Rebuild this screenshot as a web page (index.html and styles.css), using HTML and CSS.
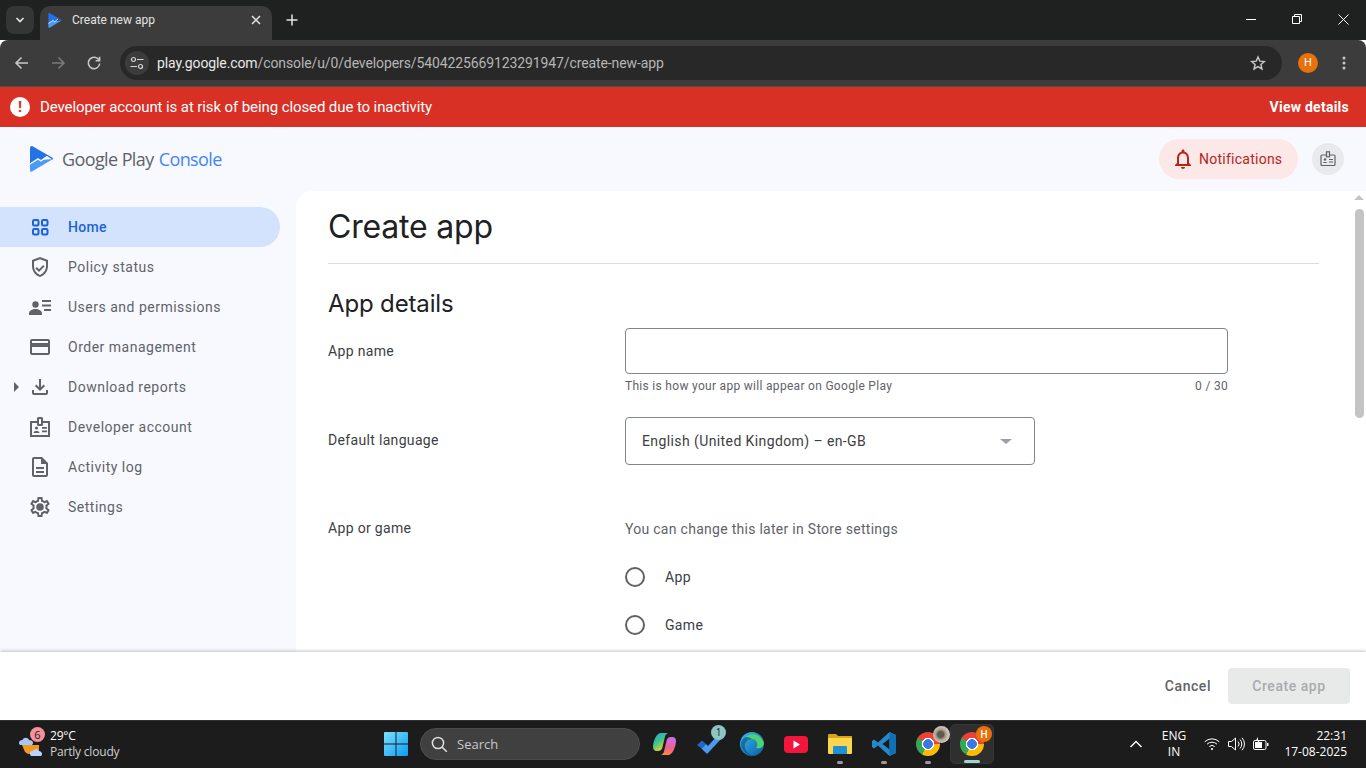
FILE: index.html
```html
<!DOCTYPE html>
<html lang="en">
  <head>
    <meta charset="UTF-8" />
    <meta name="viewport" content="width=device-width, initial-scale=1.0" />
    <title>Create new app</title>
    <link rel="stylesheet" href="styles.css">
  </head>
  <body>
    <svg class="defs" width="0" height="0">
      <symbol id="play-logo" viewBox="0 0 23 26">
        <path fill="#4a9af6" d="M0 17.5 L8 12 L11 14 L23 13 L2 25.6 C1 26 0 25.4 0 24.4Z" />
        <path fill="#2473e6" d="M0 2 C0 .4 1.4 -.4 2.6 .3 L22 11.6 C23.2 12.4 23.2 13 22.4 13.6 L17 10 L11 14 L8 12 L0 17.5Z" />
        <path fill="none" stroke="#fff" stroke-width="1.3" d="M0 18 L8 13 L11 15 L17 10.5" />
      </symbol>
    </svg>

    <!-- browser top -->
    <div class="tabstrip">
      <div class="tab-search">
        <svg width="12" height="12" viewBox="0 0 12 12"><path d="M2.5 4 L6 7.5 L9.5 4" fill="none" stroke="#e3e3e3" stroke-width="1.7" /></svg>
      </div>
      <div class="tab">
        <svg class="tab-icon" width="14" height="15"><use href="#play-logo" /></svg>
        <span class="tab-title">Create new app</span>
        <svg class="tab-close" width="10" height="10" viewBox="0 0 10 10"><path d="M1 1 L9 9 M9 1 L1 9" stroke="#e3e3e3" stroke-width="1.5" /></svg>
      </div>
      <svg class="new-tab" width="12" height="12" viewBox="0 0 12 12"><path d="M6 .5 V11.5 M.5 6 H11.5" stroke="#e3e3e3" stroke-width="1.5" /></svg>
      <div class="window-controls">
        <svg width="10" height="10" viewBox="0 0 10 10"><path d="M0 5.5 H10" stroke="#fff" /></svg>
        <svg width="10" height="10" viewBox="0 0 10 10"><path d="M.5 2.5 H7.5 V9.5 H.5Z M2.5 2.5 V.5 H9.5 V7.5 H7.5" fill="none" stroke="#fff" /></svg>
        <svg width="11" height="11" viewBox="0 0 11 11"><path d="M.5 .5 L10.5 10.5 M10.5 .5 L.5 10.5" stroke="#fff" /></svg>
      </div>
    </div>

    <div class="toolbar">
      <svg class="tool" width="16" height="16" viewBox="0 0 16 16"><path d="M14 8 H2.5 M7.5 2.5 L2 8 L7.5 13.5" fill="none" stroke="#c7c7c7" stroke-width="1.6" /></svg>
      <svg class="tool" width="16" height="16" viewBox="0 0 16 16"><path d="M2 8 H13.5 M8.5 2.5 L14 8 L8.5 13.5" fill="none" stroke="#7a7a7a" stroke-width="1.6" /></svg>
      <svg class="tool" width="16" height="16" viewBox="0 0 16 16"><path d="M13 5.2 A5.7 5.7 0 1 0 13.7 8.5 M13.6 1.8 V5.8 H9.6" fill="none" stroke="#c7c7c7" stroke-width="1.6" /></svg>
      <div class="omnibox">
        <span class="site-info">
          <svg width="14" height="14" viewBox="0 0 14 14"><g fill="none" stroke="#d5d5d5" stroke-width="1.2"><circle cx="3.5" cy="3.5" r="2" /><path d="M7 3.5 H13.5 M.5 10.5 H7" /><circle cx="10.5" cy="10.5" r="2" /></g></svg>
        </span>
        <span class="url"><span class="url-host">play.google.com</span>/console/u/0/developers/5404225669123291947/create-new-app</span>
        <svg class="star" width="16" height="16" viewBox="0 0 24 24"><path fill="none" stroke="#c7c7c7" stroke-width="2.2" d="M12 3 L14.7 9.2 L21.5 9.8 L16.4 14.3 L17.9 21 L12 17.5 L6.1 21 L7.6 14.3 L2.5 9.8 L9.3 9.2Z" /></svg>
      </div>
      <span class="avatar">H</span>
      <svg class="menu-dots" width="4" height="14" viewBox="0 0 4 14"><circle cx="2" cy="2" r="1.5" /><circle cx="2" cy="7" r="1.5" /><circle cx="2" cy="12" r="1.5" /></svg>
    </div>

    <!-- page -->
    <div class="banner">
      <span class="banner-icon">!</span>
      <span class="banner-text">Developer account is at risk of being closed due to inactivity</span>
      <span class="banner-link">View details</span>
    </div>

    <div class="console">
      <header class="console-head">
        <div class="brand">
          <svg class="brand-icon" width="23" height="26"><use href="#play-logo" /></svg>
          <span class="brand-name">Google Play <span class="brand-console">Console</span></span>
        </div>
        <div class="head-actions">
          <div class="notify-pill">
            <svg width="24" height="24" viewBox="0 0 24 24"><path fill="#b3261e" d="M12 22c1.1 0 2-.9 2-2h-4c0 1.1.9 2 2 2zm6-6v-5c0-3.07-1.63-5.64-4.5-6.32V4c0-.83-.67-1.5-1.5-1.5s-1.5.67-1.5 1.5v.68C7.64 5.36 6 7.92 6 11v5l-2 2v1h16v-1l-2-2zm-2 1H8v-6c0-2.48 1.51-4.5 4-4.5s4 2.02 4 4.5v6z" /></svg>
            <span>Notifications</span>
          </div>
          <div class="account-btn">
            <svg width="16" height="16" viewBox="0 0 16 16"><g fill="none" stroke="#5f6368" stroke-width="1.2"><rect x="1" y="4" width="14" height="10.5" rx="1" /><rect x="6.5" y=".8" width="3" height="5" fill="#e8eaed" /><path d="M9 8.5 H13 M9 11 H13" /></g><circle cx="5" cy="8.5" r="1.2" fill="#5f6368" /><path d="M2.8 12 C3 10.5 7 10.5 7.2 12Z" fill="#5f6368" /></svg>
          </div>
        </div>
      </header>

      <div class="console-body">
        <nav class="sidenav">
          <a class="nav-item nav-item-active">
            <svg class="nav-icon" viewBox="0 0 24 24"><g fill="none" stroke="#1a63d8" stroke-width="2"><rect x="5" y="5" width="5.5" height="5.5" rx="1.2" /><rect x="14" y="5" width="5.5" height="5.5" rx="1.2" /><rect x="5" y="14" width="5.5" height="5.5" rx="1.2" /><rect x="14" y="14" width="5.5" height="5.5" rx="1.2" /></g></svg>
            <span>Home</span>
          </a>
          <a class="nav-item">
            <svg class="nav-icon" viewBox="0 0 24 24"><path d="M12 2 4 5v6.09c0 5.05 3.41 9.76 8 10.91 4.59-1.15 8-5.86 8-10.91V5l-8-3zm6 9.09c0 4-2.55 7.7-6 8.83-3.45-1.13-6-4.82-6-8.83v-4.7l6-2.25 6 2.25v4.7zm-9.18.92L7.4 13.42 11 17.01l5.66-5.66-1.41-1.41-4.24 4.24z" /></svg>
            <span>Policy status</span>
          </a>
          <a class="nav-item">
            <svg class="nav-icon" viewBox="0 0 24 24"><circle cx="7.5" cy="9.5" r="3.2" /><path d="M1 18.5 C1 15.5 4.5 14 7.5 14 S14 15.5 14 18.5 V20 H1Z" /><path d="M14 5 H23 V7 H14Z M14 9.5 H23 V11.5 H14Z M16 14 H23 V16 H16Z" /></svg>
            <span>Users and permissions</span>
          </a>
          <a class="nav-item">
            <svg class="nav-icon" viewBox="0 0 24 24"><path d="M20 4H4c-1.11 0-1.99.89-1.99 2L2 18c0 1.11.89 2 2 2h16c1.11 0 2-.89 2-2V6c0-1.11-.89-2-2-2zm0 14H4v-6h16v6zm0-10H4V6h16v2z" /></svg>
            <span>Order management</span>
          </a>
          <a class="nav-item">
            <span class="nav-caret"></span>
            <svg class="nav-icon" viewBox="0 0 24 24"><path d="M11 4h2v8.2l2.6-2.6L17 11l-5 5-5-5 1.4-1.4 2.6 2.6zM4 15h2v3h12v-3h2v3c0 1.1-.9 2-2 2H6c-1.1 0-2-.9-2-2z" /></svg>
            <span>Download reports</span>
          </a>
          <a class="nav-item">
            <svg class="nav-icon" viewBox="0 0 24 24"><g fill="none" stroke="#5f6368" stroke-width="2"><path d="M9 7 H3 V21 H21 V7 H15" /><rect x="10" y="3" width="4" height="7" rx=".5" /></g><circle cx="8.5" cy="13" r="1.6" /><path d="M5.5 18 C5.5 15.4 11.5 15.4 11.5 18Z M14 12 H19 V13.7 H14Z M14 15.5 H19 V17.2 H14Z" /></svg>
            <span>Developer account</span>
          </a>
          <a class="nav-item">
            <svg class="nav-icon" viewBox="0 0 24 24"><path d="M8 16h8v2H8zm0-4h8v2H8zm6-10H6c-1.1 0-2 .9-2 2v16c0 1.1.89 2 1.99 2H18c1.1 0 2-.9 2-2V8l-6-6zm4 18H6V4h7v5h5v11z" /></svg>
            <span>Activity log</span>
          </a>
          <a class="nav-item">
            <svg class="nav-icon" viewBox="0 0 24 24"><path d="M19.43 12.98c.04-.32.07-.64.07-.98 0-.34-.03-.66-.07-.98l2.11-1.65c.19-.15.24-.42.12-.64l-2-3.46c-.09-.16-.26-.25-.44-.25-.06 0-.12.01-.17.03l-2.49 1c-.52-.4-1.08-.73-1.69-.98l-.38-2.65C14.46 2.18 14.25 2 14 2h-4c-.25 0-.46.18-.49.42l-.38 2.65c-.61.25-1.17.59-1.69.98l-2.49-1c-.06-.02-.12-.03-.18-.03-.17 0-.34.09-.43.25l-2 3.46c-.13.22-.07.49.12.64l2.11 1.65c-.04.32-.07.65-.07.98 0 .33.03.66.07.98l-2.11 1.65c-.19.15-.24.42-.12.64l2 3.46c.09.16.26.25.44.25.06 0 .12-.01.17-.03l2.49-1c.52.4 1.08.73 1.69.98l.38 2.65c.03.24.24.42.49.42h4c.25 0 .46-.18.49-.42l.38-2.65c.61-.25 1.17-.59 1.69-.98l2.49 1c.06.02.12.03.18.03.17 0 .34-.09.43-.25l2-3.46c.12-.22.07-.49-.12-.64l-2.11-1.65zm-1.98-1.71c.04.31.05.52.05.73 0 .21-.02.43-.05.73l-.14 1.13.89.7 1.08.84-.7 1.21-1.27-.51-1.04-.42-.9.68c-.43.32-.84.56-1.25.73l-1.06.43-.16 1.13-.2 1.35h-1.4l-.19-1.35-.16-1.13-1.06-.43c-.43-.18-.83-.41-1.23-.71l-.91-.7-1.06.43-1.27.51-.7-1.21 1.08-.84.89-.7-.14-1.13c-.03-.31-.05-.54-.05-.74s.02-.43.05-.73l.14-1.13-.89-.7-1.08-.84.7-1.21 1.27.51 1.04.42.9-.68c.43-.32.84-.56 1.25-.73l1.06-.43.16-1.13.2-1.35h1.39l.19 1.35.16 1.13 1.06.43c.43.18.83.41 1.23.71l.91.7 1.06-.43 1.27-.51.7 1.21-1.07.85-.89.7.14 1.13z" /><circle cx="12" cy="12" r="3.8" /></svg>
            <span>Settings</span>
          </a>
        </nav>

        <main class="panel">
          <div class="panel-scroll">
            <h1 class="page-title">Create app</h1>
            <h2 class="section-title">App details</h2>

            <div class="form-row form-row-name">
              <label class="form-label">App name</label>
              <div class="form-field">
                <div class="text-input"></div>
                <div class="hint"><span>This is how your app will appear on Google Play</span><span>0 / 30</span></div>
              </div>
            </div>

            <div class="form-row form-row-lang">
              <label class="form-label">Default language</label>
              <div class="form-field">
                <div class="select-box">
                  <span>English (United Kingdom) – en-GB</span>
                  <span class="select-arrow"></span>
                </div>
              </div>
            </div>

            <div class="form-row form-row-type">
              <label class="form-label">App or game</label>
              <div class="form-field">
                <p class="type-note">You can change this later in Store settings</p>
                <div class="radio-row"><span class="radio"></span><span>App</span></div>
                <div class="radio-row"><span class="radio"></span><span>Game</span></div>
              </div>
            </div>
          </div>
          <div class="scrollbar">
            <span class="scroll-up"></span>
            <span class="scroll-thumb"></span>
          </div>
        </main>
      </div>

      <footer class="action-bar">
        <span class="btn-cancel">Cancel</span>
        <span class="btn-create">Create app</span>
      </footer>
    </div>

    <!-- windows taskbar -->
    <div class="taskbar">
      <div class="weather">
        <div class="weather-icon">
          <svg width="26" height="26" viewBox="0 0 26 26">
            <path d="M4 14 H21 V19 A8 6 0 0 1 7 21 Z" fill="#f39a1e" />
            <path d="M1 12 C1 9 4 9 4.5 9 C5.5 6 10 6 11 9 C15 9 16 12 14 14 H3 C2 14 1 13.5 1 12Z" fill="#a8c8f4" />
            <path d="M12 22.5 C12 20 14.5 20 15 20 C16 17.5 20 17.5 21 20 C24 20 25 24 23 25 H13.5 C12.5 25 12 23.5 12 22.5Z" fill="#b8d4f8" />
          </svg>
          <span class="weather-badge">6</span>
        </div>
        <div class="weather-text">
          <span class="weather-temp">29°C</span>
          <span class="weather-desc">Partly cloudy</span>
        </div>
      </div>

      <div class="task-center">
        <svg class="win-logo" width="24" height="24" viewBox="0 0 25 25">
          <defs><linearGradient id="win" x1="0" y1="0" x2="1" y2="1"><stop offset="0" stop-color="#7be0fb" /><stop offset="1" stop-color="#0a9cf5" /></linearGradient></defs>
          <path fill="url(#win)" d="M0 1 A1 1 0 0 1 1 0 H12 V12 H0Z M13 0 H24 A1 1 0 0 1 25 1 V12 H13Z M0 13 H12 V25 H1 A1 1 0 0 1 0 24Z M13 13 H25 V24 A1 1 0 0 1 24 25 H13Z" />
        </svg>
        <div class="task-search">
          <svg width="17" height="17" viewBox="0 0 17 17"><circle cx="7" cy="7" r="5.6" fill="none" stroke="#e0e0e0" stroke-width="1.5" /><path d="M11 11 L15.8 15.8" stroke="#e0e0e0" stroke-width="1.6" /></svg>
          <span>Search</span>
        </div>

        <div class="task-apps">
          <div class="task-app">
            <svg width="23" height="22" viewBox="0 0 23 22">
              <defs>
                <linearGradient id="cop-a" x1="0" y1="0" x2=".6" y2="1"><stop offset="0" stop-color="#1c9cf0" /><stop offset=".5" stop-color="#3fc58a" /><stop offset="1" stop-color="#f5d327" /></linearGradient>
                <linearGradient id="cop-b" x1=".5" y1="0" x2=".4" y2="1"><stop offset="0" stop-color="#c86ff0" /><stop offset=".6" stop-color="#f0608c" /><stop offset="1" stop-color="#fb8a3c" /></linearGradient>
              </defs>
              <path fill="url(#cop-a)" d="M7 0 H16 C13.5 0 12.5 2 12 3.5 L9.5 14 C9 16.5 7.5 18 5 18 H3.5 C1.5 18 0 16.5 0 14 C0 9 3 1 7 0Z" />
              <path fill="url(#cop-b)" d="M16 22 H7 C9.5 22 10.5 20 11 18.5 L13.5 8 C14 5.5 15.5 4 18 4 H19.5 C21.5 4 23 5.5 23 8 C23 13 20 21 16 22Z" />
            </svg>
          </div>
          <div class="task-app task-app-todo">
            <svg width="24" height="20" viewBox="0 0 24 20"><path fill="#2564cf" d="M0 11 L5 6.5 L9 10 L4.5 14.5Z" /><path fill="#4a9af0" d="M4.5 14.5 L9 10 L11 12 L20 2 L24 5 L11 19 Q10 20 9 19Z" /></svg>
            <span class="task-badge task-badge-teal">1</span>
          </div>
          <div class="task-app">
            <svg width="24" height="24" viewBox="0 0 24 24">
              <defs><linearGradient id="edge" x1="0" y1="0" x2="1" y2="1"><stop offset="0" stop-color="#35c1f1" /><stop offset="1" stop-color="#0c59a4" /></linearGradient></defs>
              <circle cx="12" cy="12" r="12" fill="url(#edge)" />
              <path fill="#4fd36e" d="M6 5 C11 0 21 2 24 11 C24 15 20 17 16 16 C19 13 17 7 12 7 C9 7 7 8 6 5Z" />
              <path fill="#0f3f7a" d="M12 7 C7 7 4 11 5 16 C6 20 10 23 14 24 C9 24 1 20 1 12 C1 8 4 5 7 5 C9 5 11 6 12 7Z" opacity=".55" />
            </svg>
          </div>
          <div class="task-app">
            <svg width="24" height="17" viewBox="0 0 24 17"><rect width="24" height="17" rx="4" fill="#f2163d" /><path d="M9.5 4.5 L16 8.5 L9.5 12.5Z" fill="#fff" /></svg>
          </div>
          <div class="task-app task-app-open">
            <svg width="24" height="22" viewBox="0 0 24 22"><path fill="#d9a21b" d="M0 2 Q0 1 1 1 H8 L10 3 H24 V19 H0Z" /><path fill="#fbd64d" d="M0 5 H24 V20 Q24 21 23 21 H1 Q0 21 0 20Z" /><path fill="#1f8fd6" d="M5 14 Q5 13 6 13 H18 Q19 13 19 14 V21 H5Z" /></svg>
          </div>
          <div class="task-app task-app-open">
            <svg width="24" height="24" viewBox="0 0 24 24"><path fill="#2489ca" d="M17.5 0 L24 3 V21 L17.5 24 L6 13.5 L2 16.5 L0 15 V9 L2 7.5 L6 10.5Z M17.5 6.5 L10.5 12 L17.5 17.5Z" /><path fill="#1070b3" d="M17.5 0 L24 3 V21 L17.5 24Z" /></svg>
          </div>
          <div class="task-app task-app-open">
            <span class="chrome"></span>
            <span class="task-badge task-badge-photo"></span>
          </div>
          <div class="task-app task-app-active">
            <span class="chrome"></span>
            <span class="task-badge task-badge-orange">H</span>
          </div>
        </div>
      </div>

      <div class="tray">
        <svg class="tray-up" width="14" height="8" viewBox="0 0 14 8"><path d="M1.5 7 L7 1.5 L12.5 7" fill="none" stroke="#fff" stroke-width="1.4" /></svg>
        <div class="tray-lang"><span>ENG</span><span>IN</span></div>
        <div class="tray-icons">
          <svg width="16" height="14" viewBox="0 0 16 14"><g fill="none" stroke="#fff"><path d="M.7 4.8 A10.5 10.5 0 0 1 15.3 4.8" /><path d="M3 7.2 A7.2 7.2 0 0 1 13 7.2" /><path d="M5.3 9.6 A3.9 3.9 0 0 1 10.7 9.6" /></g><circle cx="8" cy="12" r="1.1" fill="#fff" /></svg>
          <svg width="17" height="14" viewBox="0 0 17 14"><g fill="none" stroke="#fff"><path d="M.5 4.5 H3.5 L7.5 1 V13 L3.5 9.5 H.5Z" /><path d="M10 4.5 A3.5 3.5 0 0 1 10 9.5" /><path d="M12 2.5 A6.5 6.5 0 0 1 12 11.5" /><path d="M14 .8 A9 9 0 0 1 14 13.2" /></g></svg>
          <svg width="16" height="14" viewBox="0 0 16 14"><rect x=".5" y="3.5" width="12.5" height="9" rx="1.5" fill="none" stroke="#fff" /><rect x="2" y="5" width="7" height="6" fill="#fff" /><rect x="14" y="6" width="1.5" height="3" fill="#fff" /><path d="M5 0 L2.5 4 H5 L4 7 L7.5 3 H5Z" fill="#fff" /></svg>
        </div>
        <div class="tray-clock"><span>22:31</span><span>17-08-2025</span></div>
      </div>
    </div>
  </body>
</html>
```

FILE: styles.css
```css
* {
  box-sizing: border-box;
}

html,
body {
  margin: 0;
  height: 768px;
  overflow: hidden;
}

body {
  display: flex;
  flex-direction: column;
  font-family: Roboto, "Liberation Sans", sans-serif;
  background: #fff;
}

.defs {
  display: block;
  height: 0;
}

/* browser chrome */
.tabstrip {
  height: 40px;
  flex: none;
  display: flex;
  background: #1f2020;
  padding-top: 6px;
  padding-left: 6px;
}

.tab-search {
  width: 28px;
  height: 28px;
  border-radius: 8px;
  background: #343535;
  display: flex;
  align-items: center;
  justify-content: center;
}

.tab {
  width: 232px;
  height: 34px;
  margin-left: 6px;
  border-radius: 10px 10px 0 0;
  background: #3c3c3c;
  display: flex;
  align-items: center;
  padding: 0 11px 6px 8px;
}

.tab-icon {
  flex: none;
}

.tab-title {
  margin-left: 10px;
  flex: 1;
  color: #e3e3e3;
  font-size: 12px;
}

.new-tab {
  margin: 8px 0 0 14px;
}

.window-controls {
  margin-left: auto;
  width: 138px;
  height: 28px;
  margin-top: -6px;
  margin-right: 0;
  padding-top: 14px;
  display: grid;
  grid-template-columns: repeat(3, 46px);
  justify-items: center;
  align-items: start;
}

.toolbar {
  height: 47px;
  flex: none;
  display: flex;
  align-items: center;
  background: #3c3c3c;
  border-bottom: 1px solid #4f4f4f;
  border-radius: 8px 8px 0 0;
  margin-top: 0;
  padding-left: 14px;
}

.tool {
  margin-right: 20px;
  flex: none;
}

.omnibox {
  width: 1162px;
  margin-left: -2px;
  height: 34px;
  border-radius: 17px;
  background: #282828;
  display: flex;
  align-items: center;
  padding-left: 5px;
}

.site-info {
  width: 24px;
  height: 24px;
  border-radius: 50%;
  background: #3c3c3c;
  display: flex;
  align-items: center;
  justify-content: center;
}

.url {
  margin-left: 8px;
  font-size: 14px;
  letter-spacing: -0.11px;
  color: #b5b6b6;
  white-space: nowrap;
}

.url-host {
  color: #e8e8e8;
}

.star {
  margin-left: auto;
  margin-right: 16px;
}

.avatar {
  width: 20px;
  height: 20px;
  margin-left: 16px;
  border-radius: 50%;
  background: #e8710a;
  color: #fff;
  font-size: 11px;
  line-height: 20px;
  text-align: center;
}

.menu-dots {
  margin-left: 24px;
  fill: #c7c7c7;
}

.banner {
  height: 40px;
  flex: none;
  display: flex;
  align-items: center;
  background: #d93025;
  color: #fff;
  padding: 0 17px 0 10px;
  font-size: 15px;
}

.banner-icon {
  width: 20px;
  height: 20px;
  border-radius: 50%;
  background: #fff;
  color: #d93025;
  font-size: 15px;
  font-weight: 700;
  line-height: 20px;
  text-align: center;
}

.banner-text {
  margin-left: 10px;
  letter-spacing: -0.1px;
}

.banner-link {
  margin-left: auto;
  font-size: 14px;
  font-weight: 700;
  letter-spacing: 0.25px;
}

/* console page */
.console {
  flex: 1;
  min-height: 0;
  display: flex;
  flex-direction: column;
  background: #f8f9ff;
}

.console-head {
  height: 64px;
  flex: none;
  display: flex;
  align-items: center;
  justify-content: space-between;
  padding: 0 22px 0 30px;
}

.brand {
  display: flex;
  align-items: center;
}

.brand-name {
  margin-left: 9px;
  font-family: "Open Sans", sans-serif;
  font-size: 18px;
  letter-spacing: -0.6px;
  color: #5f6368;
  white-space: nowrap;
}

.brand-console {
  margin-left: 1px;
  color: #4285f4;
}

.head-actions {
  display: flex;
  align-items: center;
  gap: 14px;
}

.notify-pill {
  width: 139px;
  height: 40px;
  border-radius: 20px;
  background: #fce8e6;
  color: #b3261e;
  font-size: 14px;
  letter-spacing: 0.25px;
  display: flex;
  align-items: center;
  gap: 4px;
  padding-left: 12px;
}

.account-btn {
  width: 32px;
  height: 32px;
  border-radius: 50%;
  background: #e8eaed;
  display: flex;
  align-items: center;
  justify-content: center;
}

.console-body {
  flex: 1;
  min-height: 0;
  display: flex;
}

.sidenav {
  width: 296px;
  flex: none;
  padding: 16px 16px 0 0;
}

.nav-item {
  position: relative;
  height: 40px;
  display: flex;
  align-items: center;
  padding-left: 28px;
  font-size: 14px;
  letter-spacing: 0.5px;
  color: #5f6368;
}

.nav-item-active {
  background: #d3e3fd;
  color: #1a63d8;
  font-weight: 500;
  letter-spacing: 0.35px;
  border-radius: 0 20px 20px 0;
}

.nav-icon {
  width: 24px;
  height: 24px;
  margin-right: 16px;
  fill: #5f6368;
}

.nav-caret {
  position: absolute;
  left: 14px;
  top: 15px;
  border-left: 5px solid #5f6368;
  border-top: 5px solid transparent;
  border-bottom: 5px solid transparent;
}

.panel {
  flex: 1;
  min-width: 0;
  display: flex;
  background: #fff;
  border-radius: 16px 0 0 0;
  overflow: hidden;
}

.panel-scroll {
  flex: 1;
  min-width: 0;
  padding: 0 33px 0 32px;
  color: #202124;
}

.page-title {
  margin: 0;
  height: 73px;
  padding-top: 14px;
  border-bottom: 1px solid #dadce0;
  font-family: Inter, sans-serif;
  font-size: 32px;
  font-weight: 400;
  line-height: 44px;
  letter-spacing: -0.2px;
}

.section-title {
  margin: 24px 0 0;
  font-family: Inter, sans-serif;
  font-size: 24px;
  font-weight: 400;
  line-height: 32px;
  letter-spacing: -0.15px;
}

.form-row {
  display: flex;
  font-size: 14px;
  letter-spacing: 0.33px;
}

.form-row-name {
  margin-top: 8px;
}

.form-row-lang {
  margin-top: 24px;
}

.form-row-type {
  margin-top: 53px;
}

.form-label {
  width: 297px;
  flex: none;
  color: #3c4043;
  padding-top: 13px;
  line-height: 20px;
}

.form-row-type .form-label {
  padding-top: 0;
}

.form-field {
  width: 603px;
}

.text-input {
  height: 46px;
  border: 1px solid #80868b;
  border-radius: 4px;
}

.hint {
  display: flex;
  justify-content: space-between;
  margin-top: 5px;
  font-size: 12px;
  line-height: 14px;
  letter-spacing: 0.3px;
  color: #5f6368;
}

.select-box {
  width: 410px;
  height: 48px;
  border: 1px solid #80868b;
  border-radius: 4px;
  padding: 0 22px 0 16px;
  display: flex;
  align-items: center;
  justify-content: space-between;
  color: #3c4043;
  letter-spacing: 0.4px;
}

.select-arrow {
  border-top: 5px solid #9aa0a6;
  border-left: 6px solid transparent;
  border-right: 6px solid transparent;
}

.type-note {
  margin: 1px 0 14px;
  line-height: 20px;
  letter-spacing: 0.28px;
  color: #5f6368;
}

.radio-row {
  height: 48px;
  display: flex;
  align-items: center;
  gap: 20px;
  color: #3c4043;
}

.radio {
  width: 20px;
  height: 20px;
  border: 2px solid #5f6368;
  border-radius: 50%;
}

.scrollbar {
  width: 14px;
  flex: none;
  display: flex;
  flex-direction: column;
  align-items: center;
  padding-top: 4px;
}

.scroll-up {
  border-bottom: 5px solid #c4c4c4;
  border-left: 5px solid transparent;
  border-right: 5px solid transparent;
}

.scroll-thumb {
  width: 9px;
  height: 209px;
  margin-top: 9px;
  border-radius: 5px;
  background: #c4c4c4;
}

.action-bar {
  height: 68px;
  flex: none;
  position: relative;
  display: flex;
  align-items: center;
  justify-content: flex-end;
  gap: 17px;
  background: #fff;
  padding: 0 16px 0 0;
  box-shadow: 0 -1px 3px rgba(60, 64, 67, 0.3);
  font-size: 14px;
  font-weight: 500;
  letter-spacing: 0.55px;
}

.btn-cancel {
  color: #5f6368;
}

.btn-create {
  width: 122px;
  height: 36px;
  border-radius: 4px;
  background: #e8eaea;
  color: #a8abad;
  line-height: 36px;
  text-align: center;
}

/* windows taskbar */
.taskbar {
  height: 48px;
  flex: none;
  display: flex;
  align-items: center;
  background: #1c1c1c;
  border-top: 1px solid #303030;
  padding-bottom: 1px;
  color: #fff;
  font-family: "Open Sans", sans-serif;
  font-size: 12px;
}

.weather {
  width: 384px;
  flex: none;
  display: flex;
  align-items: center;
  padding-left: 18px;
}

.weather-icon {
  position: relative;
  width: 26px;
  height: 26px;
}

.weather-badge {
  position: absolute;
  left: 12px;
  top: -4px;
  width: 15px;
  height: 15px;
  border-radius: 50%;
  background: #f4929c;
  color: #1c1c1c;
  font-size: 11px;
  line-height: 15px;
  text-align: center;
}

.weather-text {
  margin-left: 6px;
  display: flex;
  flex-direction: column;
  line-height: 16px;
  letter-spacing: -0.2px;
}

.weather-desc {
  color: #d0d0d0;
}

.task-center {
  display: flex;
  align-items: center;
}

.win-logo {
  flex: none;
}

.task-search {
  width: 220px;
  height: 32px;
  margin-left: 12px;
  border-radius: 16px;
  background: #404040;
  border: 1px solid #4c4c4c;
  display: flex;
  align-items: center;
  gap: 9px;
  padding-left: 10px;
  font-size: 13px;
  color: #c8c8c8;
}

.task-apps {
  display: flex;
  margin-left: 2px;
}

.task-app {
  position: relative;
  width: 44px;
  height: 40px;
  display: flex;
  align-items: center;
  justify-content: center;
}

.task-app-todo {
  width: 42px;
  margin-left: 2px;
}

.task-app-open::after,
.task-app-active::after {
  content: "";
  position: absolute;
  left: 50%;
  bottom: 0;
  width: 6px;
  height: 3px;
  margin-left: -3px;
  border-radius: 2px;
  background: #9a9a9a;
}

.task-app-active {
  background: #2f2f2f;
  border: 1px solid #363636;
  border-radius: 5px;
}

.task-app-active::after {
  width: 16px;
  margin-left: -8px;
  background: #9ed5d2;
}

.chrome {
  width: 24px;
  height: 24px;
  border-radius: 50%;
  background:
    radial-gradient(circle, #3b78e7 0 4.6px, #fff 5px 6px, transparent 6.4px),
    conic-gradient(#ea4335 0 90deg, #fbbc04 90deg 210deg, #34a853 210deg 300deg, #ea4335 300deg);
}

.task-badge {
  position: absolute;
  top: 0;
  right: 2px;
  width: 15px;
  height: 15px;
  border-radius: 50%;
  font-size: 10px;
  line-height: 15px;
  text-align: center;
}

.task-badge-teal {
  right: 4px;
  top: 1px;
  background: #8cc5c2;
  color: #1c1c1c;
}

.task-badge-photo {
  right: 0;
  top: 2px;
  width: 17px;
  height: 17px;
  background: radial-gradient(circle at 45% 50%, #5e5a52 0 3px, #a89f90 5px, #cfc6b6 8px);
}

.task-badge-orange {
  right: 1px;
  top: 1px;
  width: 16px;
  height: 16px;
  line-height: 16px;
  background: #e8710a;
  color: #fff;
  font-weight: 600;
}

.tray {
  margin-left: auto;
  display: flex;
  align-items: center;
  padding-right: 19px;
}

.tray-up {
  margin-right: 17px;
}

.tray-lang {
  width: 28px;
  display: flex;
  flex-direction: column;
  align-items: center;
  line-height: 16px;
}

.tray-icons {
  display: flex;
  align-items: center;
  gap: 8px;
  margin-left: 16px;
}

.tray-clock {
  width: 72px;
  margin-left: 6px;
  display: flex;
  flex-direction: column;
  align-items: flex-end;
  line-height: 16px;
}
```
